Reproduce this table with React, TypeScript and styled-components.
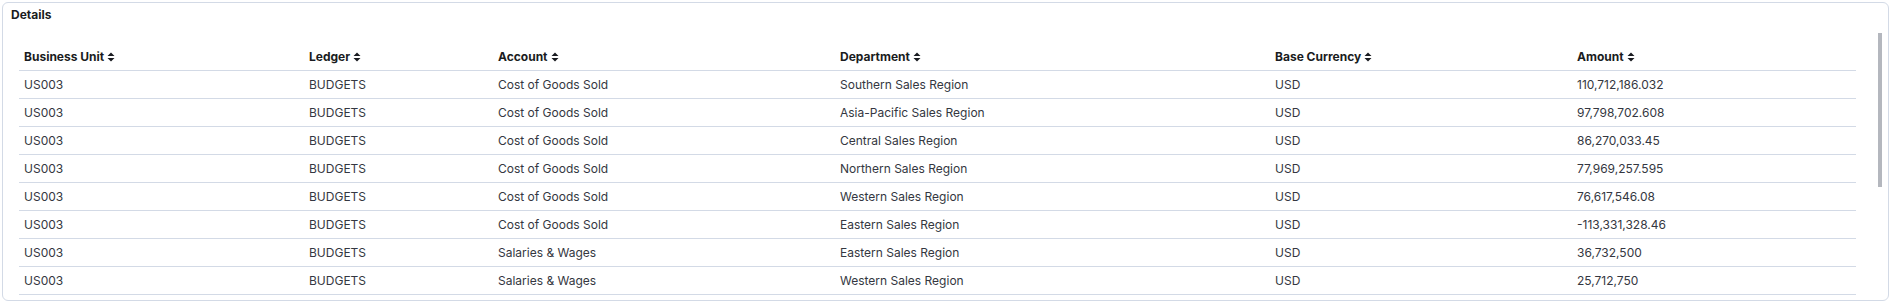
import React from "react";
import styled, { createGlobalStyle } from "styled-components";

const GlobalStyle = createGlobalStyle`
  html, body {
    margin: 0;
    padding: 0;
    background: #fff;
    font-family: Inter, "Noto Sans", "Liberation Sans", sans-serif;
  }
`;

interface Row {
  unit: string;
  ledger: string;
  account: string;
  department: string;
  currency: string;
  amount: string;
}

const rows: Row[] = [
  { unit: "US003", ledger: "BUDGETS", account: "Cost of Goods Sold", department: "Southern Sales Region", currency: "USD", amount: "110,712,186.032" },
  { unit: "US003", ledger: "BUDGETS", account: "Cost of Goods Sold", department: "Asia-Pacific Sales Region", currency: "USD", amount: "97,798,702.608" },
  { unit: "US003", ledger: "BUDGETS", account: "Cost of Goods Sold", department: "Central Sales Region", currency: "USD", amount: "86,270,033.45" },
  { unit: "US003", ledger: "BUDGETS", account: "Cost of Goods Sold", department: "Northern Sales Region", currency: "USD", amount: "77,969,257.595" },
  { unit: "US003", ledger: "BUDGETS", account: "Cost of Goods Sold", department: "Western Sales Region", currency: "USD", amount: "76,617,546.08" },
  { unit: "US003", ledger: "BUDGETS", account: "Cost of Goods Sold", department: "Eastern Sales Region", currency: "USD", amount: "-113,331,328.46" },
  { unit: "US003", ledger: "BUDGETS", account: "Salaries & Wages", department: "Eastern Sales Region", currency: "USD", amount: "36,732,500" },
  { unit: "US003", ledger: "BUDGETS", account: "Salaries & Wages", department: "Western Sales Region", currency: "USD", amount: "25,712,750" },
];

const columns: { key: keyof Row; label: string; width: number }[] = [
  { key: "unit", label: "Business Unit", width: 285 },
  { key: "ledger", label: "Ledger", width: 189 },
  { key: "account", label: "Account", width: 342 },
  { key: "department", label: "Department", width: 435 },
  { key: "currency", label: "Base Currency", width: 302 },
  { key: "amount", label: "Amount", width: 284 },
];

const Page = styled.div`
  padding: 2px 3px 1px 2px;
`;

const Panel = styled.section`
  position: relative;
  box-sizing: border-box;
  height: 299px;
  border: 1px solid #d3dae6;
  border-radius: 6px;
  background: #fff;
  display: flex;
  flex-direction: column;
  overflow: hidden;
`;

const Title = styled.h3`
  margin: 0;
  padding: 4px 8px 0;
  font-size: 12px;
  line-height: 16px;
  font-weight: 700;
  color: #1a1c21;
`;

const Body = styled.div`
  flex: 1;
  overflow: hidden;
  padding: 20px 32px 0 16px;
`;

// headless browser hides native scrollbars, so the thumb is drawn over the panel
const ScrollThumb = styled.div`
  position: absolute;
  top: 30px;
  right: 6px;
  width: 4px;
  height: 154px;
  background: rgba(105, 112, 125, 0.5);
`;

const Table = styled.table`
  width: 1837px;
  table-layout: fixed;
  border-collapse: collapse;
  font-size: 12px;
`;

const HeadCell = styled.th`
  height: 27px;
  padding: 0 5px;
  text-align: left;
  font-weight: 700;
  color: #1a1c21;
  border-bottom: 1px solid #d3dae6;
  white-space: nowrap;
`;

const HeadLabel = styled.span`
  display: inline-flex;
  align-items: center;
  gap: 3px;
`;

const Cell = styled.td`
  height: 27px;
  padding: 0 5px;
  color: #343741;
  border-bottom: 1px solid #d3dae6;
  white-space: nowrap;
`;

const SortIcon = () => (
  <svg width="8" height="10" viewBox="0 0 8 10" aria-hidden="true">
    <path d="M4 0.5 L7.5 4 H0.5 Z M4 9.5 L0.5 6 H7.5 Z" fill="#1a1c21" />
  </svg>
);

export default function App() {
  return (
    <Page>
      <GlobalStyle />
      <Panel>
        <Title>Details</Title>
        <Body>
          <Table>
            <colgroup>
              {columns.map((c) => (
                <col key={c.key} style={{ width: c.width }} />
              ))}
            </colgroup>
            <thead>
              <tr>
                {columns.map((c) => (
                  <HeadCell key={c.key}>
                    <HeadLabel>
                      {c.label}
                      <SortIcon />
                    </HeadLabel>
                  </HeadCell>
                ))}
              </tr>
            </thead>
            <tbody>
              {rows.map((r, i) => (
                <tr key={i}>
                  {columns.map((c) => (
                    <Cell key={c.key}>{r[c.key]}</Cell>
                  ))}
                </tr>
              ))}
            </tbody>
          </Table>
        </Body>
        <ScrollThumb />
      </Panel>
    </Page>
  );
}
